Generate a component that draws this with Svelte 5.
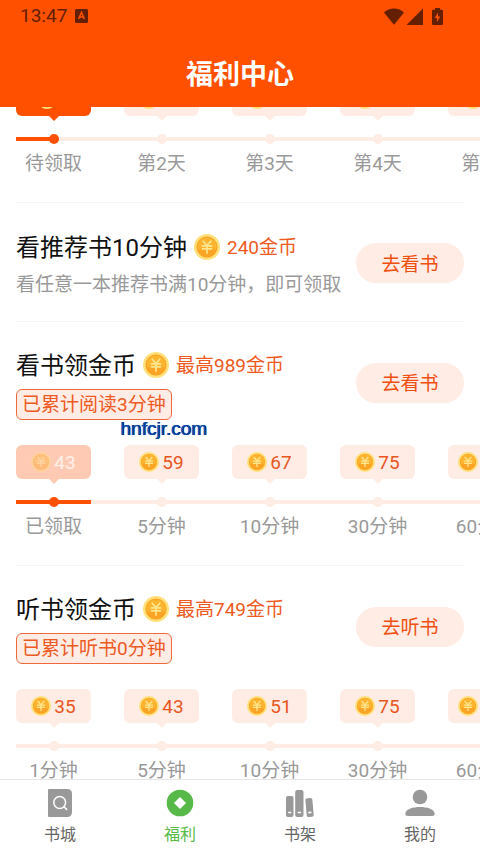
<script lang="ts">
  type Step = { coins: number; label: string; state?: 'ready' | 'claimed'; fill?: number };
  type Task = {
    title: string;
    reward: string;
    action: string;
    desc?: string;
    tag?: string;
    steps?: Step[];
  };

  const checkin: Step[] = [
    { coins: 8, label: '待领取', state: 'ready', fill: 50 },
    { coins: 18, label: '第2天' },
    { coins: 28, label: '第3天' },
    { coins: 38, label: '第4天' },
    { coins: 48, label: '第5天' }
  ];

  const tasks: Task[] = [
    {
      title: '看推荐书10分钟',
      reward: '240金币',
      action: '去看书',
      desc: '看任意一本推荐书满10分钟，即可领取'
    },
    {
      title: '看书领金币',
      reward: '最高989金币',
      action: '去看书',
      tag: '已累计阅读3分钟',
      steps: [
        { coins: 43, label: '已领取', state: 'claimed', fill: 100 },
        { coins: 59, label: '5分钟' },
        { coins: 67, label: '10分钟' },
        { coins: 75, label: '30分钟' },
        { coins: 120, label: '60分钟' }
      ]
    },
    {
      title: '听书领金币',
      reward: '最高749金币',
      action: '去听书',
      tag: '已累计听书0分钟',
      steps: [
        { coins: 35, label: '1分钟' },
        { coins: 43, label: '5分钟' },
        { coins: 51, label: '10分钟' },
        { coins: 75, label: '30分钟' },
        { coins: 120, label: '60分钟' }
      ]
    }
  ];

  const tabs = [
    { id: 'store', label: '书城' },
    { id: 'welfare', label: '福利' },
    { id: 'shelf', label: '书架' },
    { id: 'me', label: '我的' }
  ];

  let active = $state('welfare');
</script>

{#snippet coin(size: number)}
  <svg class="coin" width={size} height={size} viewBox="0 0 26 26" aria-hidden="true">
    <circle cx="13" cy="13" r="13" fill="#ffe07a" />
    <circle cx="13" cy="13" r="10.5" fill="#fdb531" />
    <path d="M3.5 16a10 10 0 0 0 19 0L19 14.5H7z" fill="#fba426" />
    <circle cx="13" cy="13" r="10" fill="none" stroke="#fba124" stroke-width="0.8" />
    <path
      d="M9.2 7.200l3.800 4.300 3.800-4.300M8.500 11.900h9M8.500 14.900h9M13 11.500v7.400"
      fill="none"
      stroke="#ffe68f"
      stroke-width="1.700"
      stroke-linecap="round"
    />
  </svg>
{/snippet}

{#snippet track(steps: Step[])}
  <ul class="track">
    {#each steps as step}
      <li class={['step', step.state]}>
        <div class="bubble">
          {@render coin(20)}
          <span>{step.coins}</span>
        </div>
        <div class="rail">
          {#if step.fill}
            <div class="fill" style="width: {step.fill}%"></div>
          {/if}
          <div class="dot"></div>
        </div>
        <div class="label">{step.label}</div>
      </li>
    {/each}
  </ul>
{/snippet}

<div class="app">
  <header>
    <div class="status">
      <span class="time">13:47</span>
      <svg width="13" height="14" viewBox="0 0 13 14" aria-hidden="true">
        <rect width="13" height="14" rx="1.5" fill="#641f00" />
        <path d="M3.6 10L6.5 3.4 9.4 10M4.6 8h3.8" fill="none" stroke="#ff5000" stroke-width="1.5" />
      </svg>
      <div class="signals">
        <svg width="20" height="17" viewBox="0 0 20 17" aria-hidden="true">
          <path d="M0 4.4C2.7 1.7 6.200 .4 10 .4s7.300 1.300 10 4L10 16.800z" fill="#641f00" />
        </svg>
        <svg width="17" height="17" viewBox="0 0 17 17" aria-hidden="true">
          <path d="M17 .5V17H.5z" fill="#641f00" />
        </svg>
        <svg class="battery" width="11" height="17" viewBox="0 0 11 17" aria-hidden="true">
          <path
            d="M3 0h5v1.800h1.700q1.300 0 1.300 1.300v12.600q0 1.300-1.300 1.300H1.300Q0 17 0 15.700V3.100q0-1.300 1.300-1.300H3z"
            fill="#641f00"
          />
          <path d="M6 4.500L2.700 10h2.200v4L8.300 8.500H6z" fill="#ff5000" />
        </svg>
      </div>
    </div>
    <h1>福利中心</h1>
  </header>

  <main>
    <div class="feed">
      <section class="checkin">
        {@render track(checkin)}
      </section>

      {#each tasks as task}
        <section>
          <div class="head">
            <div class="info">
              <div class="title-row">
                <h2>{task.title}</h2>
                {@render coin(26)}
                <span class="reward">{task.reward}</span>
              </div>
              {#if task.desc}
                <p class="desc">{task.desc}</p>
              {/if}
              {#if task.tag}
                <span class="tag">{task.tag}</span>
              {/if}
            </div>
            <button class="go">{task.action}</button>
          </div>
          {#if task.steps}
            {@render track(task.steps)}
          {/if}
        </section>
      {/each}
    </div>
    <div class="watermark">hnfcjr.com</div>
  </main>

  <nav>
    {#each tabs as tab}
      <button class={['tab', { active: active === tab.id }]} onclick={() => (active = tab.id)}>
        <svg width="30" height="28" viewBox="0 0 30 28" aria-hidden="true">
          {#if tab.id === 'store'}
            <path d="M4 0h18q5 0 5 5v18q0 5-5 5H4q-1 0-1-1V1q0-1 1-1z" fill="currentColor" />
            <circle cx="14.700" cy="13.500" r="5.900" fill="none" stroke="#fff" stroke-width="1.500" />
            <path d="M19 17.800l2.600 2.600" stroke="#fff" stroke-width="1.600" stroke-linecap="round" />
          {:else if tab.id === 'welfare'}
            <circle cx="15" cy="14" r="13.300" fill="currentColor" />
            <path d="M15 8.500l5.500 5.500-5.500 5.500L9.500 14z" fill="#fff" stroke="#fff" stroke-linejoin="round" />
          {:else if tab.id === 'shelf'}
            <rect x="1" y="7" width="7.500" height="21" rx="2" fill="currentColor" />
            <rect x="10.200" y="1" width="8.300" height="27" rx="2" fill="currentColor" />
            <rect
              x="21" y="9" width="7" height="19" rx="2"
              fill="currentColor"
              transform="rotate(-5 24.500 18)"
            />
            <path d="M3.200 23.500h3M12.700 23.500h3.400M23.400 23.700l3-.3" stroke="#fff" stroke-width="1.700" />
          {:else}
            <circle cx="15" cy="8" r="7.300" fill="currentColor" />
            <path d="M.3 24.500C1 20 8 18 15 18s14 2 14.700 6.500Q29.700 27 27 27H3Q.3 27 .3 24.500z" fill="currentColor" />
          {/if}
        </svg>
        <span>{tab.label}</span>
      </button>
    {/each}
  </nav>
</div>

<style>
  :global(body) {
    margin: 0;
    background: #fff;
  }

  .app {
    display: flex;
    flex-direction: column;
    height: 100vh;
    font-family: Roboto, 'Noto Sans CJK SC', sans-serif;
    font-size: 19px;
    line-height: 26px;
    color: #999;
  }

  h1, h2, p, ul {
    margin: 0;
    padding: 0;
    font-weight: 400;
  }

  button {
    border: 0;
    font-family: inherit;
    cursor: pointer;
  }

  svg {
    display: block;
    flex: none;
  }

  header {
    flex: none;
    background: #ff5000;
  }

  .status {
    display: flex;
    align-items: center;
    height: 32px;
    padding: 0 37px 0 20px;
    gap: 8px;
    color: #641f00;
  }

  .signals {
    display: flex;
    gap: 2px;
    margin-left: auto;
  }

  .battery {
    margin-left: 7px;
  }

  h1 {
    padding: 25px 0 14px;
    line-height: 36px;
    font-size: 27px;
    font-weight: 700;
    text-align: center;
    color: #fff;
  }

  main {
    position: relative;
    flex: 1;
    min-height: 0;
    overflow: hidden;
  }

  /* feed sits scrolled part way into the check-in card */
  .feed {
    margin-top: -25px;
    padding: 0 16px;
  }

  section {
    padding: 28px 0 22px;
    border-bottom: 1px solid #f5f5f5;
  }

  section:has(.track) {
    padding: 27px 0 25px;
  }

  section.checkin {
    padding-top: 0;
  }

  section:last-child {
    border-bottom: 0;
  }

  .head {
    display: flex;
    align-items: center;
    justify-content: space-between;
  }

  .head + .track {
    margin-top: 25px;
  }

  .info {
    display: flex;
    flex-direction: column;
    align-items: flex-start;
    gap: 8px;
    white-space: nowrap;
  }

  .title-row {
    display: flex;
    align-items: center;
    gap: 7px;
    height: 32px;
  }

  h2 {
    font-size: 24px;
    line-height: 32px;
    color: #111;
  }

  .reward {
    padding-top: 2px;
    color: #ee5a22;
  }

  h2 {
    padding-top: 2px;
  }

  .desc {
    line-height: 28px;
  }

  .tag {
    box-sizing: border-box;
    height: 31px;
    padding: 0 5px;
    border: 1px solid #ee6a3a;
    border-radius: 6px;
    line-height: 30px;
    background: #ffece4;
    color: #ee5a22;
  }

  .go {
    flex: none;
    width: 108px;
    height: 40px;
    margin-bottom: 4px;
    padding: 0 0 2px;
    border-radius: 20px;
    font-size: 19px;
    background: #ffece4;
    color: #f0500f;
  }

  .track {
    display: flex;
    gap: 33px;
    margin-right: -16px;
    overflow: hidden;
    list-style: none;
  }

  .step {
    --tint: #ffece4;
    flex: none;
    width: 75px;
  }

  .bubble {
    position: relative;
    display: flex;
    align-items: center;
    justify-content: center;
    gap: 3px;
    height: 34px;
    border-radius: 6px;
    background: var(--tint);
    color: #e8571e;
  }

  .bubble span {
    padding-top: 2px;
  }

  .bubble::after {
    content: '';
    position: absolute;
    top: 100%;
    left: 50%;
    margin-left: -5px;
    border: 5px solid transparent;
    border-top-color: var(--tint);
    border-bottom: 0;
  }

  .rail {
    position: relative;
    height: 10px;
    margin: 18px 0 7px;
  }

  .rail::before,
  .fill {
    content: '';
    position: absolute;
    top: 3px;
    left: 0;
    width: 108px;
    height: 4px;
    background: #ffece4;
  }

  .fill {
    background: #ff5000;
  }

  .dot {
    position: absolute;
    left: 50%;
    width: 10px;
    height: 10px;
    margin-left: -5px;
    border-radius: 50%;
    background: #ffece4;
  }

  .label {
    text-align: center;
    white-space: nowrap;
  }

  .ready {
    --tint: #ff5000;
  }

  .claimed {
    --tint: #ffcab3;
  }

  .ready .dot,
  .claimed .dot {
    background: #ff5000;
  }

  .ready .bubble {
    color: #fff;
  }

  .claimed .bubble {
    color: #fff0ea;
  }

  .claimed .coin {
    opacity: 0.4;
  }

  .watermark {
    position: absolute;
    top: 309px;
    left: 120px;
    font-family: 'Liberation Sans', Arial, sans-serif;
    color: #0a4bb5;
    text-shadow: 1px 0 #06245f, 0 0 2px #d8f6ff;
    pointer-events: none;
  }

  nav {
    display: flex;
    flex: none;
    border-top: 1px solid #e6e6e6;
    background: #fff;
  }

  .tab {
    display: flex;
    flex: 1;
    flex-direction: column;
    align-items: center;
    gap: 8px;
    padding: 9px 0 8px;
    font-size: 16px;
    line-height: 20px;
    background: none;
    color: #999;
  }

  .tab span {
    color: #666;
  }

  .tab.active,
  .tab.active span {
    color: #57b947;
  }
</style>
